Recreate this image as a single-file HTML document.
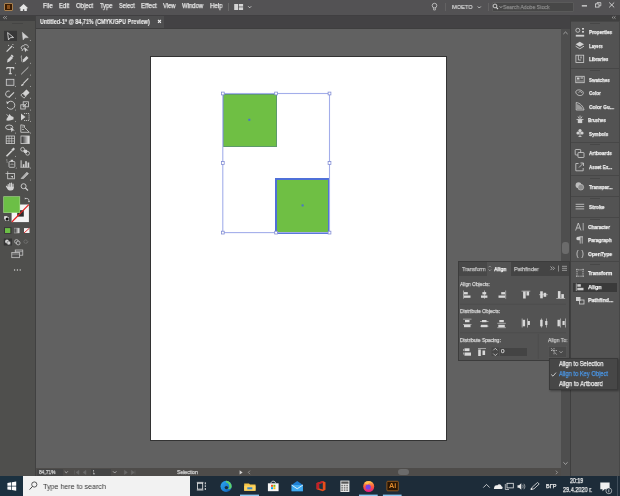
<!DOCTYPE html>
<html><head><meta charset="utf-8">
<style>
*{margin:0;padding:0;box-sizing:border-box}
html,body{width:620px;height:496px;overflow:hidden;background:#616161;font-family:"Liberation Sans",sans-serif}
.a{position:absolute}
.t{position:absolute;white-space:nowrap;line-height:1;transform-origin:0 0;will-change:transform;-webkit-text-stroke:0.25px currentColor}
svg{position:absolute;overflow:visible}
</style></head><body>
<div class="a" style="left:36px;top:29px;width:525px;height:439px;background:#616161;"></div>
<div class="a" style="left:36px;top:15px;width:534px;height:14px;background:#434244;"></div>
<div class="a" style="left:36px;top:15px;width:128px;height:14px;background:#4e4e4f;"></div>
<div class="a" style="left:36px;top:28px;width:525px;height:1px;background:#3e3e3e;"></div>
<div class="a" style="left:0px;top:15px;width:35px;height:461px;background:#4f4f4d;"></div>
<div class="a" style="left:0px;top:15px;width:35px;height:6px;background:#404040;"></div>
<div class="a" style="left:35px;top:15px;width:1px;height:461px;background:#414141;"></div>
<div class="a" style="left:561px;top:29px;width:9px;height:447px;background:#4e4e4e;"></div>
<div class="a" style="left:570px;top:15px;width:50px;height:461px;background:#535353;"></div>
<div class="a" style="left:570px;top:15px;width:50px;height:6px;background:#404040;"></div>
<div class="a" style="left:570px;top:21px;width:1px;height:455px;background:#3f3f3f;"></div>
<div class="a" style="left:619px;top:21px;width:1px;height:455px;background:#474747;"></div>
<div class="a" style="left:36px;top:468px;width:525px;height:8px;background:#4e4c4a;"></div>
<div class="a" style="left:0px;top:0px;width:620px;height:15px;background:#535254;"></div>
<div class="a" style="left:0px;top:14.5px;width:620px;height:1px;background:#403f41;"></div>
<div class="a" style="left:0px;top:476px;width:620px;height:20px;background:#1d2c39;"></div>
<div class="a" style="left:4.4px;top:2.8px;width:8.2px;height:8.3px;background:#3a1c02;border:0.9px solid #a98150;border-radius:1px"></div>
<div class="a" style="left:6.6px;top:5.3px;width:3.8px;height:3.4px;background:#8a4f1a"></div>
<svg style="left:0;top:0" width="620" height="14"><path d="M19,8.2 L23.6,3.9 L28.2,8.2 Z" fill="#e6e6e6"/><path d="M20.4,8 H26.8 V11.1 H24.3 V9.2 H22.9 V11.1 H20.4 Z" fill="#e6e6e6"/></svg>
<div class="t" style="left:42.52px;top:3.36px;font-size:6.90px;font-weight:normal;color:#e6e6e6;transform:scaleX(0.878);">File</div>
<div class="t" style="left:58.73px;top:3.36px;font-size:6.90px;font-weight:normal;color:#e6e6e6;transform:scaleX(0.860);">Edit</div>
<div class="t" style="left:75.83px;top:3.36px;font-size:6.90px;font-weight:normal;color:#e6e6e6;transform:scaleX(0.864);">Object</div>
<div class="t" style="left:100.18px;top:3.36px;font-size:6.90px;font-weight:normal;color:#e6e6e6;transform:scaleX(0.835);">Type</div>
<div class="t" style="left:119.25px;top:3.36px;font-size:6.90px;font-weight:normal;color:#e6e6e6;transform:scaleX(0.819);">Select</div>
<div class="t" style="left:141.10px;top:3.36px;font-size:6.90px;font-weight:normal;color:#e6e6e6;transform:scaleX(0.899);">Effect</div>
<div class="t" style="left:163.47px;top:3.36px;font-size:6.90px;font-weight:normal;color:#e6e6e6;transform:scaleX(0.845);">View</div>
<div class="t" style="left:182.27px;top:3.36px;font-size:6.90px;font-weight:normal;color:#e6e6e6;transform:scaleX(0.864);">Window</div>
<div class="t" style="left:209.81px;top:3.36px;font-size:6.90px;font-weight:normal;color:#e6e6e6;transform:scaleX(0.891);">Help</div>
<div class="a" style="left:228px;top:3px;width:0.7px;height:8px;background:#6a6a6a;"></div>
<svg style="left:0;top:0" width="620" height="14"><rect x="234.2" y="4" width="3.8" height="6" fill="#d5d5d5"/><rect x="238.8" y="4" width="4.3" height="2.6" fill="#d5d5d5"/><rect x="238.8" y="7.3" width="4.3" height="2.7" fill="#d5d5d5"/><path d="M248.2,6.3 L249.7,7.8 L251.2,6.3" fill="none" stroke="#d5d5d5" stroke-width="0.9"/><circle cx="434.5" cy="5.6" r="2.3" fill="none" stroke="#cfcfcf" stroke-width="0.8"/><path d="M433.6,8 V10 H435.4 V8" fill="none" stroke="#cfcfcf" stroke-width="0.7"/><rect x="445" y="3" width="0.7" height="8" fill="#6a6a6a"/><path d="M477.8,6.5 L479.3,8 L480.8,6.5" fill="none" stroke="#d5d5d5" stroke-width="0.9"/><rect x="488" y="3" width="0.7" height="8" fill="#6a6a6a"/><circle cx="494.3" cy="6.2" r="1.6" fill="none" stroke="#cfcfcf" stroke-width="0.8"/><path d="M495.4,7.3 L496.6,8.5" stroke="#cfcfcf" stroke-width="0.9"/><path d="M497.3,6.2 L498.3,7.2 L499.3,6.2" fill="none" stroke="#cfcfcf" stroke-width="0.6"/><rect x="581.8" y="5.2" width="5.2" height="1.3" fill="#d8d8d8"/><rect x="595.4" y="3.9" width="3.6" height="3.2" fill="none" stroke="#d8d8d8" stroke-width="0.8"/><path d="M597,3.9 V2.6 H600.8 V5.8 H599" fill="none" stroke="#d8d8d8" stroke-width="0.8"/><path d="M609.2,2.5 L614.2,7.4 M614.2,2.5 L609.2,7.4" stroke="#d8d8d8" stroke-width="0.9"/></svg>
<div class="a" style="left:491.8px;top:2.2px;width:82px;height:9.4px;background:#474747;border:0.7px solid #5a5a5a;border-radius:1px"></div>
<div class="t" style="left:451.55px;top:3.85px;font-size:6.20px;font-weight:normal;color:#e4e4e4;transform:scaleX(0.916);-webkit-text-stroke:0.1px currentColor;">MOETO</div>
<div class="t" style="left:503.37px;top:4.05px;font-size:6.20px;font-weight:normal;color:#8a8a8a;transform:scaleX(0.830);">Search Adobe Stock</div>
<svg style="left:0;top:0" width="620" height="14"><circle cx="495" cy="6" r="1.9" fill="none" stroke="#d8d8d8" stroke-width="0.9"/><path d="M496.3,7.3 L498,9" stroke="#d8d8d8" stroke-width="1.1"/><path d="M499.6,6.3 L500.9,7.6 L502.2,6.3" fill="none" stroke="#d8d8d8" stroke-width="0.7"/></svg>
<div class="t" style="left:39.78px;top:19.21px;font-size:6.60px;font-weight:bold;color:#eeeeee;transform:scaleX(0.820);-webkit-text-stroke:0.1px currentColor;">Untitled-1* @ 84,71% (CMYK/GPU Preview)</div>
<svg style="left:0;top:0" width="620" height="30"><path d="M158,20 L160.9,22.9 M160.9,20 L158,22.9" stroke="#ececec" stroke-width="1.1"/></svg>
<div class="a" style="left:150px;top:56px;width:297.4px;height:385px;background:#333333;"></div>
<div class="a" style="left:151px;top:57px;width:295.4px;height:383px;background:#ffffff;"></div>
<div class="a" style="left:223.3px;top:93.6px;width:53.4px;height:53.1px;background:#6fbf44;border:0.6px solid #5d9a6a"></div>
<div class="a" style="left:275.1px;top:178.1px;width:55px;height:55.6px;background:#6fbf44;border:2px solid #4f70d8"></div>
<svg style="left:0;top:0" width="620" height="496"><rect x="222.8" y="93.5" width="106.7" height="139.1" fill="none" stroke="#a3aeea" stroke-width="1.1"/><rect x="221.4" y="92.1" width="2.8" height="2.8" fill="#fff" stroke="#7d88d2" stroke-width="0.75"/><rect x="221.4" y="161.6" width="2.8" height="2.8" fill="#fff" stroke="#7d88d2" stroke-width="0.75"/><rect x="221.4" y="231.2" width="2.8" height="2.8" fill="#fff" stroke="#7d88d2" stroke-width="0.75"/><rect x="274.70000000000005" y="92.1" width="2.8" height="2.8" fill="#fff" stroke="#7d88d2" stroke-width="0.75"/><rect x="274.70000000000005" y="231.2" width="2.8" height="2.8" fill="#fff" stroke="#7d88d2" stroke-width="0.75"/><rect x="328.1" y="92.1" width="2.8" height="2.8" fill="#fff" stroke="#7d88d2" stroke-width="0.75"/><rect x="328.1" y="161.6" width="2.8" height="2.8" fill="#fff" stroke="#7d88d2" stroke-width="0.75"/><rect x="328.1" y="231.2" width="2.8" height="2.8" fill="#fff" stroke="#7d88d2" stroke-width="0.75"/><rect x="248.3" y="118.8" width="2" height="2" fill="#4a6fd0"/><rect x="301.6" y="204.4" width="2" height="2" fill="#4a6fd0"/></svg>
<svg style="left:0;top:0" width="35" height="476"><path d="M4.8,16.3 L3.3,17.6 L4.8,18.9 M6.8,16.3 L5.3,17.6 L6.8,18.9" fill="none" stroke="#cfcfcf" stroke-width="0.6"/><rect x="12" y="23" width="11" height="0.8" fill="#434343"/><rect x="4" y="30.8" width="13" height="10.2" fill="#383838"/><path d="M7.6,32.5 L13.6,37.5 L10.3,37.7 L8.5,39.9 Z" fill="none" stroke="#d2d2d2" stroke-width="0.9" stroke-linejoin="round"/><path d="M22.3,32.3 L28.3,37.6 L24.9,37.8 L23.1,40 Z" fill="#cfcfcf" stroke="#cfcfcf" stroke-width="0.5"/><path d="M30.8,39.8 L30.8,41 L29.6,41 Z" fill="#bdbdbd"/><path d="M6.6,51.6 L12.2,46" stroke="#d2d2d2" stroke-width="1.2"/><circle cx="8.6" cy="45.3" r="0.6" fill="#d2d2d2"/><circle cx="12.9" cy="44.5" r="0.6" fill="#d2d2d2"/><circle cx="13.4" cy="47.6" r="0.5" fill="#d2d2d2"/><path d="M24.5,45.8 C21,45 20.3,48.5 22.3,49.5 M22,51 C22.5,49 24,48 24.8,49" fill="none" stroke="#d2d2d2" stroke-width="0.9"/><path d="M24.3,44.5 C28,44.5 29.5,46.5 27.5,48" fill="none" stroke="#d2d2d2" stroke-width="0.8"/><path d="M24,47 L28.5,50.5 L26.2,50.6 L25.2,52.2 Z" fill="#d2d2d2"/><path d="M7,62.5 L7.6,59.5 L11,56 L13,58 L9.5,61.5 Z" fill="#d2d2d2"/><rect x="10.8" y="55" width="2.6" height="1.6" transform="rotate(45 12 56)" fill="#d2d2d2"/><path d="M22.5,62.5 L23.1,59.5 L26.5,56 L28.5,58 L25,61.5 Z" fill="#d2d2d2"/><path d="M21.5,55.5 C20.5,58 22.5,59 21.5,61.5" fill="none" stroke="#d2d2d2" stroke-width="0.7"/><path d="M16.0,62.599999999999994 L16.0,63.8 L14.8,63.8 Z" fill="#bdbdbd"/><path d="M31.0,62.599999999999994 L31.0,63.8 L29.8,63.8 Z" fill="#bdbdbd"/><path d="M6.8,67.6 H13.7 V69.2 M6.8,69.2 V67.6 M10.25,67.6 V73.6 M8.8,73.6 H11.7" fill="none" stroke="#d2d2d2" stroke-width="1.1"/><path d="M21.2,74.3 L28.4,67.2" stroke="#d2d2d2" stroke-width="0.9"/><path d="M16.0,74.3 L16.0,75.5 L14.8,75.5 Z" fill="#bdbdbd"/><path d="M31.0,74.3 L31.0,75.5 L29.8,75.5 Z" fill="#bdbdbd"/><rect x="6.3" y="79.3" width="7.6" height="6" fill="#5a5a5a" stroke="#d2d2d2" stroke-width="0.8"/><path d="M21,86 C21.3,84.5 22,83.8 23,83.8 L23.8,84.6 C23.6,85.6 22.5,86.2 21,86 Z" fill="#d2d2d2"/><path d="M23.2,83.6 L28.3,78.4" stroke="#d2d2d2" stroke-width="1.1"/><path d="M16.0,85.8 L16.0,87 L14.8,87 Z" fill="#bdbdbd"/><path d="M31.0,85.8 L31.0,87 L29.8,87 Z" fill="#bdbdbd"/><path d="M9,97 A3,3 0 1 1 9.6,91.2" fill="none" stroke="#d2d2d2" stroke-width="0.9"/><path d="M8.8,97.5 L14,92.3" stroke="#d2d2d2" stroke-width="1.2"/><g transform="rotate(-45 25.2 93.8)"><rect x="21.2" y="91.6" width="8" height="4.4" rx="0.5" fill="#d2d2d2"/><rect x="21.2" y="91.6" width="2.6" height="4.4" fill="#4f4f4d" stroke="#d2d2d2" stroke-width="0.7"/></g><path d="M16.0,97.6 L16.0,98.8 L14.8,98.8 Z" fill="#bdbdbd"/><path d="M31.0,97.6 L31.0,98.8 L29.8,98.8 Z" fill="#bdbdbd"/><path d="M7.6,102.8 A4,4 0 1 1 7.2,107" fill="none" stroke="#d2d2d2" stroke-width="0.9"/><path d="M6.3,101.3 L9,102.6 L7,104.3 Z" fill="#d2d2d2"/><rect x="20.8" y="104.8" width="4.4" height="4.2" fill="none" stroke="#d2d2d2" stroke-width="0.8"/><rect x="23.2" y="101.8" width="5.2" height="5" fill="none" stroke="#d2d2d2" stroke-width="0.8"/><path d="M24,106 L27,103" stroke="#d2d2d2" stroke-width="0.7"/><path d="M16.0,109.3 L16.0,110.5 L14.8,110.5 Z" fill="#bdbdbd"/><path d="M31.0,109.3 L31.0,110.5 L29.8,110.5 Z" fill="#bdbdbd"/><path d="M6.5,119 C8,117 9,114.5 9.5,114 C10.5,115.5 11.5,116.5 13.5,117 L13.5,119.5 C11.5,120 9,121 6.5,120.5 Z" fill="#d2d2d2"/><path d="M6.5,114.5 L8.5,116" stroke="#d2d2d2" stroke-width="0.8"/><path d="M21,113.5 L25.5,117 L21,120.5 Z" fill="#d2d2d2"/><path d="M24,113.5 H29 V120.5 H24" fill="none" stroke="#d2d2d2" stroke-width="0.8" stroke-dasharray="1.2 0.8"/><path d="M16.0,120.8 L16.0,122 L14.8,122 Z" fill="#bdbdbd"/><path d="M31.0,120.8 L31.0,122 L29.8,122 Z" fill="#bdbdbd"/><ellipse cx="9.2" cy="127.3" rx="3.6" ry="2.3" fill="none" stroke="#d2d2d2" stroke-width="0.9"/><path d="M10.5,127 L14.8,130.5 L12.6,130.6 L11.6,132.3 Z" fill="#d2d2d2"/><path d="M20.8,124.8 V132.3 H29.3 L24.5,127.5 L24.5,125.5 Z" fill="none" stroke="#d2d2d2" stroke-width="0.8"/><path d="M22,127 H23.8 M22,129.5 H24" stroke="#d2d2d2" stroke-width="0.7"/><path d="M16.0,132.3 L16.0,133.5 L14.8,133.5 Z" fill="#bdbdbd"/><path d="M31.0,132.3 L31.0,133.5 L29.8,133.5 Z" fill="#bdbdbd"/><rect x="6.2" y="136" width="8.2" height="7.6" fill="none" stroke="#d2d2d2" stroke-width="0.8"/><path d="M6.2,138.5 H14.4 M6.2,141 H14.4 M9,136 V143.6 M11.7,136 V143.6" stroke="#d2d2d2" stroke-width="0.6"/><defs><linearGradient id="g1" x1="0" x2="1"><stop offset="0" stop-color="#222"/><stop offset="1" stop-color="#eee"/></linearGradient></defs><rect x="21" y="136" width="8.2" height="7.6" fill="url(#g1)" stroke="#d2d2d2" stroke-width="0.8"/><path d="M6.5,156.3 L12,150.8" stroke="#d2d2d2" stroke-width="1.6"/><path d="M11.3,149.8 L13.5,147.6 L15,149.1 L12.8,151.3 Z" fill="#d2d2d2"/><circle cx="22.6" cy="149.3" r="1.9" fill="none" stroke="#d2d2d2" stroke-width="0.8"/><circle cx="25.5" cy="151.3" r="1.9" fill="#d2d2d2"/><circle cx="27.6" cy="153.3" r="1.9" fill="none" stroke="#d2d2d2" stroke-width="0.8"/><path d="M16.0,155.8 L16.0,157 L14.8,157 Z" fill="#bdbdbd"/><rect x="9" y="161.5" width="5.8" height="5.8" rx="0.6" fill="none" stroke="#d2d2d2" stroke-width="0.8"/><rect x="10.7" y="159.8" width="2.4" height="1.6" fill="#d2d2d2"/><path d="M6,160 H7.5 M6.5,162 H7.8" stroke="#d2d2d2" stroke-width="0.6"/><path d="M10.5,165 C11.5,163.5 12.5,163.5 13.5,165" fill="none" stroke="#d2d2d2" stroke-width="0.6"/><path d="M20.4,167.3 H29.5" stroke="#d2d2d2" stroke-width="0.7"/><rect x="20.6" y="160.3" width="1" height="7" fill="#d2d2d2"/><rect x="22.8" y="164.2" width="1.6" height="3.1" fill="#d2d2d2"/><rect x="25.2" y="161.2" width="1.6" height="6.1" fill="#d2d2d2"/><rect x="27.6" y="162.5" width="1.6" height="4.8" fill="#d2d2d2"/><path d="M16.7,167.3 L16.7,168.5 L15.5,168.5 Z" fill="#bdbdbd"/><path d="M31.0,167.3 L31.0,168.5 L29.8,168.5 Z" fill="#bdbdbd"/><rect x="7.7" y="173.5" width="6.8" height="5.3" fill="none" stroke="#d2d2d2" stroke-width="0.8"/><path d="M5.5,173.5 H7.7 M7.7,171.3 V173.5" stroke="#d2d2d2" stroke-width="0.7"/><path d="M10.5,176 H13 V178" fill="#d2d2d2"/><path d="M20.5,178.8 L26.8,172 L28.8,173.6 L23.5,178.8 Z" fill="#d2d2d2"/><path d="M22.5,178 L27.2,173.2" stroke="#4f4f4d" stroke-width="0.5"/><path d="M31.0,179.3 L31.0,180.5 L29.8,180.5 Z" fill="#bdbdbd"/><path d="M8.2,187.5 V184.6 M9.8,187 V183.4 M11.4,187 V183.2 M13,187.5 V184" fill="none" stroke="#d2d2d2" stroke-width="1.2" stroke-linecap="round"/><path d="M7.6,186.8 H13.7 V188.5 C13.5,189.8 12.5,190.4 11,190.4 H9.5 C8.5,190.4 7.5,189.5 6.2,187 L5.8,186 C6.5,185.5 7.2,186 7.6,186.8 Z" fill="#d2d2d2"/><circle cx="23.6" cy="186.2" r="2.5" fill="none" stroke="#d2d2d2" stroke-width="0.9"/><path d="M25.4,188 L28,190.5" stroke="#d2d2d2" stroke-width="1.1"/><rect x="11.6" y="204.5" width="17.3" height="17.6" fill="#f4f4f4"/><rect x="17.2" y="210.2" width="6.6" height="6.4" fill="#2e2e2e"/><path d="M11.8,222 L28.8,204.6" stroke="#e02020" stroke-width="1.2"/><rect x="3.3" y="196.3" width="16.8" height="16.6" fill="#a6d98a"/><rect x="3.9" y="196.9" width="15.6" height="15.4" fill="#6cbf46"/><path d="M25.5,198.5 C28,198 29,199 29,201.5" fill="none" stroke="#d2d2d2" stroke-width="0.7"/><path d="M24.8,197.6 L26.3,198.5 L24.8,199.4 Z M28,201 L29,202.5 L30,201 Z" fill="#d2d2d2"/><rect x="4.2" y="216.2" width="3.2" height="3.2" fill="#eee"/><rect x="5.6" y="217.6" width="3.2" height="3.2" fill="#111" stroke="#eee" stroke-width="0.4"/><rect x="4.1" y="227.3" width="7.4" height="6.4" fill="#343434"/><rect x="5" y="228.1" width="5.3" height="4.9" fill="#6cbf46"/><rect x="14.2" y="228.1" width="5" height="4.9" fill="url(#g1)" stroke="#ccc" stroke-width="0.4"/><rect x="24" y="228.1" width="5.5" height="4.9" fill="#f4f4f4"/><path d="M24,233 L29.5,228.1" stroke="#e02020" stroke-width="0.9"/><rect x="3.8" y="238.5" width="8.2" height="7" fill="#343434"/><circle cx="7" cy="241.5" r="1.9" fill="#d2d2d2"/><circle cx="8.8" cy="243" r="1.9" fill="#d2d2d2" stroke="#343434" stroke-width="0.4"/><circle cx="16.5" cy="241.5" r="1.9" fill="none" stroke="#d2d2d2" stroke-width="0.7"/><circle cx="18.2" cy="243" r="1.9" fill="#525252" stroke="#d2d2d2" stroke-width="0.7"/><circle cx="25.6" cy="241.6" r="1.7" fill="none" stroke="#7a7a7a" stroke-width="0.6"/><path d="M26.5,243.5 L28.5,241.5" stroke="#7a7a7a" stroke-width="0.5"/><rect x="15.2" y="250" width="7.6" height="5.2" fill="#525252" stroke="#d2d2d2" stroke-width="0.7"/><rect x="11.8" y="252.5" width="7.6" height="5.2" fill="#525252" stroke="#d2d2d2" stroke-width="0.7"/><path d="M15.2,251.6 H22.8 M11.8,254 H19.4" stroke="#d2d2d2" stroke-width="0.5"/><circle cx="14.6" cy="270" r="0.7" fill="#d2d2d2"/><circle cx="17.4" cy="270" r="0.7" fill="#d2d2d2"/><circle cx="20.2" cy="270" r="0.7" fill="#d2d2d2"/></svg>
<div class="a" style="left:571px;top:20.5px;width:48px;height:46.5px;background:#535353;border-top:1px solid #474747"></div>
<div class="a" style="left:590px;top:23.1px;width:10px;height:0.8px;background:#474747;"></div>
<div class="a" style="left:571px;top:67.5px;width:48px;height:73.5px;background:#535353;border-top:1px solid #474747"></div>
<div class="a" style="left:590px;top:70.1px;width:10px;height:0.8px;background:#474747;"></div>
<div class="a" style="left:571px;top:141.5px;width:48px;height:33.0px;background:#535353;border-top:1px solid #474747"></div>
<div class="a" style="left:590px;top:144.1px;width:10px;height:0.8px;background:#474747;"></div>
<div class="a" style="left:571px;top:175px;width:48px;height:20px;background:#535353;border-top:1px solid #474747"></div>
<div class="a" style="left:590px;top:177.6px;width:10px;height:0.8px;background:#474747;"></div>
<div class="a" style="left:571px;top:195.5px;width:48px;height:20.5px;background:#535353;border-top:1px solid #474747"></div>
<div class="a" style="left:590px;top:198.1px;width:10px;height:0.8px;background:#474747;"></div>
<div class="a" style="left:571px;top:216.5px;width:48px;height:44.0px;background:#535353;border-top:1px solid #474747"></div>
<div class="a" style="left:590px;top:219.1px;width:10px;height:0.8px;background:#474747;"></div>
<div class="a" style="left:571px;top:261px;width:48px;height:46px;background:#535353;border-top:1px solid #474747"></div>
<div class="a" style="left:590px;top:263.6px;width:10px;height:0.8px;background:#474747;"></div>
<svg style="left:0;top:0" width="620" height="30"><path d="M613.5,16.3 L612.2,17.5 L613.5,18.7 M615.5,16.3 L614.2,17.5 L615.5,18.7" fill="none" stroke="#cfcfcf" stroke-width="0.6"/></svg>
<div class="a" style="left:573px;top:282.6px;width:44px;height:9px;background:#3a3a3a;"></div>
<div class="t" style="left:588.50px;top:29.12px;font-size:6.00px;font-weight:bold;color:#f0f0f0;transform:scaleX(0.778);">Properties</div>
<div class="t" style="left:588.72px;top:43.12px;font-size:6.00px;font-weight:bold;color:#f0f0f0;transform:scaleX(0.710);">Layers</div>
<div class="t" style="left:588.70px;top:56.42px;font-size:6.00px;font-weight:bold;color:#f0f0f0;transform:scaleX(0.761);">Libraries</div>
<div class="t" style="left:588.56px;top:76.62px;font-size:6.00px;font-weight:bold;color:#f0f0f0;transform:scaleX(0.753);">Swatches</div>
<div class="t" style="left:588.52px;top:89.82px;font-size:6.00px;font-weight:bold;color:#f0f0f0;transform:scaleX(0.757);">Color</div>
<div class="t" style="left:588.50px;top:103.62px;font-size:6.00px;font-weight:bold;color:#f0f0f0;transform:scaleX(0.816);">Color Gu...</div>
<div class="t" style="left:588.41px;top:116.92px;font-size:6.00px;font-weight:bold;color:#f0f0f0;transform:scaleX(0.740);">Brushes</div>
<div class="t" style="left:588.56px;top:130.62px;font-size:6.00px;font-weight:bold;color:#f0f0f0;transform:scaleX(0.769);">Symbols</div>
<div class="t" style="left:588.58px;top:150.42px;font-size:6.00px;font-weight:bold;color:#f0f0f0;transform:scaleX(0.800);">Artboards</div>
<div class="t" style="left:588.59px;top:164.12px;font-size:6.00px;font-weight:bold;color:#f0f0f0;transform:scaleX(0.759);">Asset Ex...</div>
<div class="t" style="left:588.65px;top:183.52px;font-size:6.00px;font-weight:bold;color:#f0f0f0;transform:scaleX(0.788);">Transpar...</div>
<div class="t" style="left:588.55px;top:203.62px;font-size:6.00px;font-weight:bold;color:#f0f0f0;transform:scaleX(0.832);">Stroke</div>
<div class="t" style="left:588.01px;top:223.62px;font-size:6.00px;font-weight:bold;color:#f0f0f0;transform:scaleX(0.787);">Character</div>
<div class="t" style="left:587.89px;top:237.32px;font-size:6.00px;font-weight:bold;color:#f0f0f0;transform:scaleX(0.802);">Paragraph</div>
<div class="t" style="left:588.00px;top:251.12px;font-size:6.00px;font-weight:bold;color:#f0f0f0;transform:scaleX(0.837);">OpenType</div>
<div class="t" style="left:588.15px;top:270.12px;font-size:6.00px;font-weight:bold;color:#f0f0f0;transform:scaleX(0.823);">Transform</div>
<div class="t" style="left:588.06px;top:284.12px;font-size:6.00px;font-weight:bold;color:#f0f0f0;transform:scaleX(0.904);">Align</div>
<div class="t" style="left:587.86px;top:297.12px;font-size:6.00px;font-weight:bold;color:#f0f0f0;transform:scaleX(0.872);">Pathfind...</div>
<svg style="left:0;top:0" width="620" height="496"><circle cx="577.8" cy="30.3" r="2" fill="none" stroke="#d0d0d0" stroke-width="0.8"/><rect x="582" y="28" width="2" height="1.6" fill="#d0d0d0"/><rect x="582" y="31" width="2" height="1.6" fill="#d0d0d0"/><rect x="575.8" y="34.8" width="8.4" height="1.8" fill="#d0d0d0"/><path d="M579.8,41.8 L584,44.3 L579.8,46.8 L575.6,44.3 Z" fill="#d0d0d0"/><path d="M575.6,46.2 L579.8,48.8 L584,46.2" fill="none" stroke="#d0d0d0" stroke-width="0.9"/><rect x="575.9" y="55.2" width="7.8" height="7.3" fill="none" stroke="#d0d0d0" stroke-width="0.8"/><path d="M578.4,55.2 V60 H581.2" fill="none" stroke="#d0d0d0" stroke-width="0.8"/><rect x="580.5" y="56.5" width="1" height="2" fill="#d0d0d0"/><rect x="575.8" y="76.3" width="8.4" height="6.4" fill="none" stroke="#d0d0d0" stroke-width="0.8"/><rect x="577" y="77.5" width="2.5" height="2" fill="#d0d0d0"/><path d="M576.5,81 H583.5" stroke="#d0d0d0" stroke-width="0.6"/><rect x="580.5" y="77.5" width="2.5" height="1" fill="#d0d0d0"/><path d="M576,93 C575,90.5 578,89.5 580,90 C582.5,90.5 584.5,92.5 582.5,94.8 C580.5,96.3 577,95.5 576,93 Z" fill="none" stroke="#d0d0d0" stroke-width="0.8"/><path d="M578.5,92.5 C579.5,91 582,91.5 581.8,93" fill="none" stroke="#d0d0d0" stroke-width="0.7"/><path d="M576.2,110 V102.5 C580,102.8 583.5,106.5 584,110 Z" fill="none" stroke="#d0d0d0" stroke-width="0.8"/><path d="M577,109.5 V104 C580,105 582.5,107 583,109.5 Z" fill="#9a9a9a"/><rect x="577.8" y="119.5" width="4.4" height="3.6" fill="#d0d0d0"/><path d="M580,119 V115.5 M578,116.5 L579,118.5 M582,116.5 L581,118.5" stroke="#d0d0d0" stroke-width="0.8"/><rect x="576.5" y="119" width="7" height="0.8" fill="#d0d0d0"/><circle cx="580" cy="130.6" r="1.6" fill="#d0d0d0"/><circle cx="578" cy="133" r="1.6" fill="#d0d0d0"/><circle cx="582" cy="133" r="1.6" fill="#d0d0d0"/><path d="M580,132 V136.5 M578.5,136.5 H581.5" stroke="#d0d0d0" stroke-width="0.8"/><rect x="575.2" y="149.5" width="5.5" height="5.5" rx="0.8" fill="none" stroke="#d0d0d0" stroke-width="0.8"/><rect x="578" y="152.5" width="6" height="5" rx="0.5" fill="#535353" stroke="#d0d0d0" stroke-width="0.8"/><path d="M578.5,163.5 H575.8 V170.8 H583.2 V168" fill="none" stroke="#d0d0d0" stroke-width="0.8"/><path d="M579,167.5 L583.5,163 M580.5,163 H583.5 V166" fill="none" stroke="#d0d0d0" stroke-width="0.8"/><circle cx="578.5" cy="185.2" r="2.9" fill="#bdbdbd"/><circle cx="580.8" cy="187.2" r="2.9" fill="#8d8d8d" stroke="#d0d0d0" stroke-width="0.5"/><path d="M575.6,204.3 H584.2 M575.6,206.6 H584.2 M575.6,208.9 H584.2" stroke="#d0d0d0" stroke-width="0.8"/><path d="M575.6,230.5 L578.3,223 L581,230.5 M576.6,228 H580" fill="none" stroke="#d0d0d0" stroke-width="0.8"/><path d="M583.2,223 V230.5" stroke="#d0d0d0" stroke-width="0.7"/><path d="M580,236.8 H577.8 C576,236.8 575.8,240.3 577.8,240.3 H580 Z" fill="#d0d0d0"/><path d="M580.2,236.8 V243.6 M582.2,236.8 V243.6 M579.5,236.8 H583" stroke="#d0d0d0" stroke-width="0.8"/><path d="M578.2,250 C576.5,252 576.5,256 578.2,258 M581.8,250 C583.5,252 583.5,256 581.8,258" fill="none" stroke="#d0d0d0" stroke-width="0.8"/><path d="M576,269.8 H584 M576,276.2 H584 M577,268.8 V277.2 M583,268.8 V277.2" stroke="#d0d0d0" stroke-width="0.8" stroke-dasharray="1.3 0.9"/><path d="M576.3,283.5 V291" stroke="#d0d0d0" stroke-width="0.7"/><rect x="577.3" y="284.2" width="3.5" height="2.5" fill="#d0d0d0"/><rect x="577.3" y="287.8" width="6.2" height="2.5" fill="#d0d0d0"/><rect x="576" y="297" width="4.5" height="4" fill="#d0d0d0"/><rect x="579.5" y="300" width="4.5" height="4" fill="none" stroke="#d0d0d0" stroke-width="0.8"/></svg>
<svg style="left:0;top:0" width="620" height="496"><path d="M563.4,34 L565.5,32 L567.6,34" fill="none" stroke="#c8c8c8" stroke-width="0.7"/><path d="M563.4,462.3 L565.5,464.3 L567.6,462.3" fill="none" stroke="#c8c8c8" stroke-width="0.7"/></svg>
<div class="a" style="left:562.2px;top:242px;width:6.8px;height:11.5px;background:#6b6b6b;border-radius:3px"></div>
<div class="a" style="left:457.5px;top:260.5px;width:112px;height:100px;background:#535353;border:1px solid #3c3c3c"></div>
<div class="a" style="left:458.5px;top:261.5px;width:110px;height:14px;background:#444444;"></div>
<div class="a" style="left:458.5px;top:261.5px;width:28px;height:14px;background:#484848;"></div>
<div class="a" style="left:486.5px;top:261.5px;width:24.5px;height:14.5px;background:#535353;"></div>
<div class="t" style="left:462.30px;top:266.12px;font-size:6.00px;font-weight:normal;color:#c4c4c4;transform:scaleX(0.872);">Transform</div>
<div class="t" style="left:493.58px;top:266.12px;font-size:6.00px;font-weight:bold;color:#f6f6f6;transform:scaleX(0.828);">Align</div>
<div class="t" style="left:513.57px;top:266.12px;font-size:6.00px;font-weight:normal;color:#c4c4c4;transform:scaleX(0.904);">Pathfinder</div>
<svg style="left:0;top:0" width="620" height="496"><path d="M488.5,267.3 L489.8,266 L491.1,267.3 M488.5,269.5 L489.8,270.8 L491.1,269.5" fill="none" stroke="#bbb" stroke-width="0.6"/><path d="M550.5,266.5 L552.2,268.3 L550.5,270.1 M552.8,266.5 L554.5,268.3 L552.8,270.1" fill="none" stroke="#ccc" stroke-width="0.7"/><rect x="558.2" y="265.5" width="0.7" height="6" fill="#aaa"/><path d="M562,266.3 H567 M562,268.3 H567 M562,270.3 H567" stroke="#bbb" stroke-width="0.7"/><rect x="460" y="303.8" width="106" height="0.6" fill="#4a4a4a"/><rect x="460" y="332.5" width="106" height="0.6" fill="#4a4a4a"/><rect x="537.8" y="334" width="0.6" height="25" fill="#4a4a4a"/><rect x="463.3" y="290.5" width="0.6" height="8.2" fill="#d8d8d8"/><rect x="464" y="292.1" width="3.8" height="2.3" fill="#d8d8d8"/><rect x="464" y="295.5" width="6.5" height="2.3" fill="#d8d8d8"/><rect x="484.2" y="290.5" width="0.6" height="8.2" fill="#d8d8d8"/><rect x="482.4" y="292.1" width="3.8" height="2.3" fill="#d8d8d8"/><rect x="481" y="295.5" width="6.4" height="2.3" fill="#d8d8d8"/><rect x="505.5" y="290.5" width="0.6" height="8.2" fill="#d8d8d8"/><rect x="501.2" y="292.1" width="3.8" height="2.3" fill="#d8d8d8"/><rect x="498.5" y="295.5" width="6.5" height="2.3" fill="#d8d8d8"/><rect x="521.5" y="290.8" width="8.8" height="0.6" fill="#d8d8d8"/><rect x="523.1" y="291.5" width="2.6" height="7" fill="#d8d8d8"/><rect x="526.5" y="291.5" width="2.6" height="4" fill="#d8d8d8"/><rect x="539" y="294.5" width="8.8" height="0.6" fill="#d8d8d8"/><rect x="540.2" y="291.3" width="2.6" height="7" fill="#d8d8d8"/><rect x="543.6" y="292.8" width="2.6" height="4" fill="#d8d8d8"/><rect x="556.3" y="298.3" width="8.8" height="0.6" fill="#d8d8d8"/><rect x="557.9" y="291.1" width="2.6" height="7" fill="#d8d8d8"/><rect x="561.3" y="294.1" width="2.6" height="4" fill="#d8d8d8"/><rect x="463" y="318.8" width="8.5" height="0.6" fill="#d8d8d8"/><rect x="463" y="324.1" width="8.5" height="0.6" fill="#d8d8d8"/><rect x="465" y="320.0" width="4.5" height="2.2" fill="#d8d8d8"/><rect x="464" y="324.8" width="6.5" height="2.4" fill="#d8d8d8"/><rect x="480" y="321.1" width="8.5" height="0.6" fill="#d8d8d8"/><rect x="480" y="325.8" width="8.5" height="0.6" fill="#d8d8d8"/><rect x="482" y="320.0" width="4.5" height="2.2" fill="#d8d8d8"/><rect x="481" y="324.8" width="6.5" height="2.4" fill="#d8d8d8"/><rect x="497.3" y="322.9" width="8.5" height="0.6" fill="#d8d8d8"/><rect x="497.3" y="327.5" width="8.5" height="0.6" fill="#d8d8d8"/><rect x="499.3" y="320.0" width="4.5" height="2.2" fill="#d8d8d8"/><rect x="498.3" y="324.8" width="6.5" height="2.4" fill="#d8d8d8"/><rect x="521.8" y="318.5" width="0.6" height="9" fill="#d8d8d8"/><rect x="527.0" y="318.5" width="0.6" height="9" fill="#d8d8d8"/><rect x="522.7" y="319.8" width="2.4" height="6.5" fill="#d8d8d8"/><rect x="527.7" y="321.0" width="2.2" height="4" fill="#d8d8d8"/><rect x="541" y="318.5" width="0.6" height="9" fill="#d8d8d8"/><rect x="546" y="318.5" width="0.6" height="9" fill="#d8d8d8"/><rect x="540.2" y="319.8" width="2.4" height="6.5" fill="#d8d8d8"/><rect x="545.2" y="321.0" width="2.2" height="4" fill="#d8d8d8"/><rect x="560.3" y="318.5" width="0.6" height="9" fill="#d8d8d8"/><rect x="565.0999999999999" y="318.5" width="0.6" height="9" fill="#d8d8d8"/><rect x="557.5" y="319.8" width="2.4" height="6.5" fill="#d8d8d8"/><rect x="562.5" y="321.0" width="2.2" height="4" fill="#d8d8d8"/><rect x="463" y="349" width="0.6" height="2" fill="#d8d8d8"/><rect x="463" y="352.5" width="0.6" height="2" fill="#d8d8d8"/><rect x="464.5" y="348.3" width="5" height="2.8" fill="#d8d8d8"/><rect x="464.5" y="352.5" width="6.5" height="3.2" fill="#d8d8d8"/><rect x="478" y="348" width="8" height="0.6" fill="#d8d8d8"/><rect x="478.2" y="349.5" width="2.6" height="6.5" fill="#d8d8d8"/><rect x="482.5" y="350.5" width="2.6" height="4.5" fill="#d8d8d8"/><rect x="491.6" y="347.5" width="7.6" height="8.5" fill="#474747"/><path d="M493.3,350.3 L495.3,348.3 L497.3,350.3 M493.3,353.6 L495.3,355.6 L497.3,353.6" fill="none" stroke="#d8d8d8" stroke-width="0.8"/><rect x="548.2" y="346.2" width="18.6" height="11.4" fill="#4a4a4a" stroke="#5e5e5e" stroke-width="0.6"/><path d="M551,348 L557,355 M551,350.5 H557 M554,348 V355" stroke="#d8d8d8" stroke-width="0.7" stroke-dasharray="1 0.7"/><path d="M559.5,351.3 L561,352.8 L562.5,351.3" fill="none" stroke="#d8d8d8" stroke-width="0.6"/></svg>
<div class="a" style="left:499.5px;top:347.5px;width:27.3px;height:8.5px;background:#444444;"></div>
<div class="t" style="left:460.30px;top:280.52px;font-size:6.00px;font-weight:normal;color:#d8d8d8;transform:scaleX(0.809);">Align Objects:</div>
<div class="t" style="left:460.10px;top:308.89px;font-size:5.80px;font-weight:normal;color:#d8d8d8;transform:scaleX(0.852);">Distribute Objects:</div>
<div class="t" style="left:460.41px;top:337.86px;font-size:5.60px;font-weight:normal;color:#d8d8d8;transform:scaleX(0.869);">Distribute Spacing:</div>
<div class="t" style="left:548.00px;top:337.80px;font-size:5.20px;font-weight:normal;color:#c0c0c0;transform:scaleX(0.981);">Align To:</div>
<div class="t" style="left:500.75px;top:349.29px;font-size:5.80px;font-weight:normal;color:#d0d0d0;transform:scaleX(1.078);">0</div>
<div class="a" style="left:548.5px;top:357.8px;width:69.5px;height:31.8px;background:#474747;border:1px solid #3a3a3a;box-shadow:1px 1px 2px rgba(0,0,0,.35)"></div>
<div class="t" style="left:558.90px;top:360.54px;font-size:6.80px;font-weight:normal;color:#eeeeee;transform:scaleX(0.847);">Align to Selection</div>
<div class="t" style="left:559.00px;top:370.84px;font-size:6.80px;font-weight:normal;color:#4a98ea;transform:scaleX(0.847);">Align to Key Object</div>
<div class="t" style="left:559.00px;top:381.34px;font-size:6.80px;font-weight:normal;color:#eeeeee;transform:scaleX(0.871);">Align to Artboard</div>
<svg style="left:0;top:0" width="620" height="496"><path d="M551.2,374.5 L553,376.2 L556,372.6" fill="none" stroke="#e6e6e6" stroke-width="0.8"/></svg>
<div class="a" style="left:37.3px;top:468.6px;width:25.7px;height:7.2px;background:#444444;"></div>
<div class="a" style="left:91.3px;top:468.6px;width:20.2px;height:7.2px;background:#444444;"></div>
<div class="t" style="left:38.68px;top:470.16px;font-size:5.60px;font-weight:normal;color:#d6d6d6;transform:scaleX(0.867);">84,71%</div>
<div class="t" style="left:92.78px;top:470.16px;font-size:5.60px;font-weight:normal;color:#d6d6d6;transform:scaleX(0.534);">1</div>
<div class="t" style="left:177.37px;top:470.16px;font-size:5.60px;font-weight:normal;color:#d6d6d6;transform:scaleX(0.905);">Selection</div>
<svg style="left:0;top:0" width="620" height="496"><path d="M64.7,471.3 L66.3,472.9 L67.9,471.3" fill="none" stroke="#cfcfcf" stroke-width="0.7"/><path d="M113,471.3 L114.7,473 L116.4,471.3" fill="none" stroke="#cfcfcf" stroke-width="0.7"/><path d="M74.6,470.3 V474.5 M79,470.3 L76,472.4 L79,474.5 Z M86,470.3 L83,472.4 L86,474.5 Z" fill="#6a6a6a" stroke="#6a6a6a" stroke-width="0.5"/><path d="M124.4,470.3 L127.4,472.4 L124.4,474.5 Z M131.3,470.3 L134.3,472.4 L131.3,474.5 Z M135,470.3 V474.5" fill="#6a6a6a" stroke="#6a6a6a" stroke-width="0.5"/><path d="M239.6,470.3 L242.6,472.4 L239.6,474.5 Z" fill="#d0d0d0"/><path d="M250,470.6 L248.3,472.4 L250,474.2" fill="none" stroke="#bbb" stroke-width="0.6"/><path d="M555.8,470.6 L557.5,472.4 L555.8,474.2" fill="none" stroke="#bbb" stroke-width="0.6"/></svg>
<div class="a" style="left:397.7px;top:469.3px;width:11.3px;height:5.5px;background:#6b6b6b;border-radius:3px"></div>
<div class="a" style="left:0px;top:476px;width:23.4px;height:20px;background:#1b3140;"></div>
<div class="a" style="left:23.4px;top:476px;width:166.2px;height:20px;background:#f2f2f2;"></div>
<div class="t" style="left:42.56px;top:482.87px;font-size:7.60px;font-weight:normal;color:#333333;transform:scaleX(0.937);-webkit-text-stroke:0;">Type here to search</div>
<svg style="left:0;top:0" width="620" height="496"><path d="M7.4,482.9 L11.3,482.3 V485.8 H7.4 Z M12,482.2 L16.2,481.6 V485.8 H12 Z M7.4,486.5 H11.3 V490 L7.4,489.4 Z M12,486.5 H16.2 V490.7 L12,490.1 Z" fill="#ffffff"/><circle cx="34.3" cy="484.5" r="2.6" fill="none" stroke="#333" stroke-width="0.8"/><path d="M32.4,486.5 L29.6,489.6" stroke="#333" stroke-width="0.9"/><rect x="197.5" y="483.3" width="5.2" height="5.8" fill="none" stroke="#e8e8e8" stroke-width="0.8"/><path d="M196.8,482.4 H203.4 M196.8,490 H203.4" stroke="#e8e8e8" stroke-width="0.8"/><rect x="204.8" y="482.3" width="1" height="2" fill="#e8e8e8"/><rect x="204.8" y="485.3" width="1" height="1.6" fill="#e8e8e8"/><rect x="204.8" y="488" width="1" height="2" fill="#e8e8e8"/><defs><linearGradient id="eg" x1="0" y1="0" x2="1" y2="1"><stop offset="0" stop-color="#2fa8f0"/><stop offset=".6" stop-color="#1a7fd4"/><stop offset="1" stop-color="#0f4fa0"/></linearGradient><linearGradient id="fx" x1="0" y1="0" x2="0" y2="1"><stop offset="0" stop-color="#ffbd4f"/><stop offset=".5" stop-color="#ff5a3c"/><stop offset="1" stop-color="#e31587"/></linearGradient></defs><circle cx="226.1" cy="486.4" r="5.6" fill="url(#eg)"/><path d="M226.1,480.8 A5.6,5.6 0 0 1 231.7,486.6 C231.5,489 229.5,489.5 228,489 A2.8,2.8 0 0 0 229.3,486 C229,483.8 227.5,482.8 226,482.6 Z" fill="#5fd16a"/><circle cx="226.4" cy="487.6" r="1.7" fill="#1c2d3a"/><path d="M244.2,483.5 H249 L250,484.5 H255.5 V490.7 H244.2 Z" fill="#f6c343"/><rect x="244.2" y="485.6" width="11.3" height="5.1" fill="#fcd462"/><rect x="247.3" y="487.3" width="5" height="2" fill="#3a87c8"/><rect x="240" y="494.6" width="19" height="1.4" fill="#8cc8f2"/><path d="M267.9,483.3 H278.6 V491.2 H267.9 Z" fill="#f5f5f5"/><path d="M271,483.3 C271,480.5 275.5,480.5 275.5,483.3" fill="none" stroke="#f5f5f5" stroke-width="0.8"/><rect x="271" y="484.8" width="2" height="2" fill="#f35325"/><rect x="273.4" y="484.8" width="2" height="2" fill="#81bc06"/><rect x="271" y="487.2" width="2" height="2" fill="#05a6f0"/><rect x="273.4" y="487.2" width="2" height="2" fill="#ffba08"/><path d="M291.6,485 L297.2,481 L302.9,485 V491.2 H291.6 Z" fill="#1f7fd3"/><rect x="291.6" y="485" width="11.3" height="6.2" fill="#3eaaf0"/><path d="M291.6,485 L297.2,488.8 L302.9,485" fill="none" stroke="#e8f4fc" stroke-width="0.9"/><path d="M316.6,483 L322.8,481 L325.5,482.2 V489.8 L322.8,491.2 L316.6,489.2 Z" fill="#e94e1b"/><path d="M319.2,483.8 L322.8,482.8 V489.4 L319.2,488.4 Z" fill="#1b3140"/><path d="M316.6,483 L322.8,481 V483 L319,484 V488.5 L316.6,489.2 Z" fill="#c21f2b"/><rect x="340.4" y="480.6" width="9" height="11.4" fill="#e6e6e6"/><rect x="341.3" y="481.5" width="7.2" height="2.2" fill="#555"/><rect x="341.3" y="484.8" width="1.6" height="1.5" fill="#777"/><rect x="341.3" y="487.1" width="1.6" height="1.5" fill="#777"/><rect x="341.3" y="489.40000000000003" width="1.6" height="1.5" fill="#777"/><rect x="343.8" y="484.8" width="1.6" height="1.5" fill="#777"/><rect x="343.8" y="487.1" width="1.6" height="1.5" fill="#777"/><rect x="343.8" y="489.40000000000003" width="1.6" height="1.5" fill="#777"/><rect x="346.3" y="484.8" width="1.6" height="1.5" fill="#777"/><rect x="346.3" y="487.1" width="1.6" height="1.5" fill="#777"/><rect x="346.3" y="489.40000000000003" width="1.6" height="1.5" fill="#777"/><circle cx="368.7" cy="486.5" r="5.5" fill="url(#fx)"/><circle cx="368.2" cy="487" r="2.6" fill="#7542e5"/><path d="M364.5,482.5 C366,481 370,480.5 372.5,482.5 C370,482.2 368.5,483 368,484.5 C366,484 365,483.5 364.5,482.5 Z" fill="#ffbd4f"/><rect x="359" y="494.6" width="18.7" height="1.4" fill="#8cc8f2"/><rect x="386.9" y="481.3" width="11.4" height="9.5" rx="0.8" fill="#2a1604" stroke="#a9651e" stroke-width="0.8"/><rect x="382.9" y="494.6" width="18.7" height="1.4" fill="#8cc8f2"/><path d="M483.3,487.6 L486.5,484.4 L489.7,487.6" fill="none" stroke="#e8e8e8" stroke-width="0.8"/><path d="M494.2,488.9 H501.8 C503,488.9 503,486.3 501.5,486.3 C501.3,484.3 498.5,483.5 497.5,485.3 C495.5,484.8 494.2,486 494.5,487 C493.8,487.2 493.8,488.9 494.2,488.9 Z" fill="#eeeeee"/><rect x="507" y="483.3" width="6.3" height="4.6" fill="none" stroke="#e8e8e8" stroke-width="0.8"/><path d="M505.3,484 V489.5 H509" fill="none" stroke="#e8e8e8" stroke-width="0.7"/><path d="M517.5,485.3 H519 L521.3,483.3 V489.7 L519,487.7 H517.5 Z" fill="#e8e8e8"/><path d="M522.5,484.8 C523.3,485.8 523.3,487.2 522.5,488.2 M523.8,483.8 C525.2,485.5 525.2,487.5 523.8,489.2" fill="none" stroke="#e8e8e8" stroke-width="0.6"/><path d="M531,489.5 L532.2,487.2 L537.5,482.5 L539.2,484 L534,488.8 Z" fill="none" stroke="#e8e8e8" stroke-width="0.8"/><circle cx="531.5" cy="489" r="0.9" fill="#e8e8e8"/><path d="M600.3,482.5 H609.6 V489.3 H604.5 L602.5,491.3 V489.3 H600.3 Z" fill="#f0f0f0"/><circle cx="608.8" cy="490.8" r="2.9" fill="#1b2a38" stroke="#f0f0f0" stroke-width="0.6"/><rect x="608.5" y="489.3" width="0.7" height="3" fill="#f0f0f0"/><rect x="617.3" y="476" width="0.6" height="20" fill="#5b6772"/></svg>
<div class="t" style="left:389.22px;top:483.38px;font-size:6.40px;font-weight:bold;color:#e08a2c;transform:scaleX(1.140);-webkit-text-stroke:0;">Ai</div>
<div class="t" style="left:546.06px;top:483.56px;font-size:5.60px;font-weight:normal;color:#eeeeee;transform:scaleX(0.988);">БГР</div>
<div class="t" style="left:570.44px;top:478.48px;font-size:6.40px;font-weight:normal;color:#eeeeee;transform:scaleX(0.819);">20:19</div>
<div class="t" style="left:562.62px;top:487.38px;font-size:6.40px;font-weight:normal;color:#eeeeee;transform:scaleX(0.866);">29.4.2020 г.</div>
</body></html>
